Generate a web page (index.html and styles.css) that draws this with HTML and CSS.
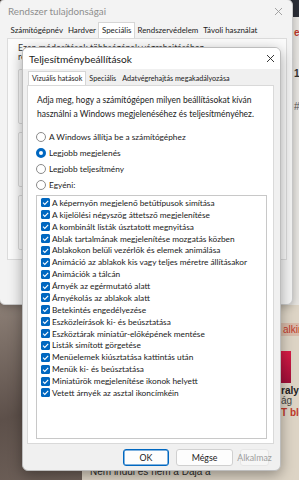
FILE: index.html
```html
<!DOCTYPE html>
<html lang="hu">
<head>
<meta charset="utf-8">
<title>Teljesítménybeállítások</title>
<link rel="stylesheet" href="styles.css">
</head>
<body>
<div class="desktop">
  <div class="browser">
    <div class="b-top"></div>
    <div class="b-body">
      <div class="b-main">
        <div class="b-caption">Nem indul és nem a Dája a</div>
      </div>
      <div class="b-side">
        <div class="b-strip">
          <span class="b-e">e</span>
          <span class="b-num">1:</span>
          <span class="b-hash">#</span>
        </div>
        <span class="b-pill">alkir</span>
        <div class="b-img"></div>
        <span class="b-bold">raly</span>
        <span class="b-small">ág</span>
        <span class="b-red">T blog</span>
      </div>
    </div>
  </div>

  <div class="win outer">
    <div class="titlebar">
      <span class="title">Rendszer tulajdonságai</span>
      <svg class="close" width="9" height="9" viewBox="0 0 9 9"><path d="M1 1L8 8M8 1L1 8" stroke="#9a9a9a" stroke-width="0.9" fill="none"/></svg>
    </div>
    <div class="tabs">
      <span class="tab">Számítógépnév</span>
      <span class="tab">Hardver</span>
      <span class="tab sel">Speciális</span>
      <span class="tab">Rendszervédelem</span>
      <span class="tab">Távoli használat</span>
    </div>
    <div class="panel">
      <p class="note">Ezen módosítások többségének végrehajtásához rendszergazdaként kell bejelentkeznie.</p>
      <div class="group"><span class="legend">Teljesítmény</span></div>
      <div class="group"><span class="legend">Felhasználói profilok</span></div>
      <div class="group"><span class="legend">Indítás és helyreállítás</span></div>
    </div>
  </div>

  <div class="win inner">
    <div class="titlebar">
      <span class="title">Teljesítménybeállítások</span>
      <svg class="close" width="9" height="9" viewBox="0 0 9 9"><path d="M1 1L8 8M8 1L1 8" stroke="#222" stroke-width="0.9" fill="none"/></svg>
    </div>
    <div class="body">
      <div class="tabs">
        <span class="tab sel">Vizuális hatások</span>
        <span class="tab">Speciális</span>
        <span class="tab">Adatvégrehajtás megakadályozása</span>
      </div>
      <div class="panel">
        <p class="intro">Adja meg, hogy a számítógépen milyen beállításokat kíván<br>használni a Windows megjelenéséhez és teljesítményéhez.</p>
        <div class="radios">
          <div class="radio"><span class="rb"></span>A Windows állítja be a számítógéphez</div>
          <div class="radio"><span class="rb on"></span>Legjobb megjelenés</div>
          <div class="radio"><span class="rb"></span>Legjobb teljesítmény</div>
          <div class="radio"><span class="rb"></span>Egyéni:</div>
        </div>
        <div class="list">
          <div class="item"><span class="cb"><svg width="9" height="9" viewBox="0 0 9 9"><path d="M2 4.6L3.8 6.4L7.2 2.8" stroke="#fff" stroke-width="1.1" fill="none"/></svg></span>A képernyőn megjelenő betűtípusok simítása</div>
          <div class="item"><span class="cb"><svg width="9" height="9" viewBox="0 0 9 9"><path d="M2 4.6L3.8 6.4L7.2 2.8" stroke="#fff" stroke-width="1.1" fill="none"/></svg></span>A kijelölési négyszög áttetsző megjelenítése</div>
          <div class="item"><span class="cb"><svg width="9" height="9" viewBox="0 0 9 9"><path d="M2 4.6L3.8 6.4L7.2 2.8" stroke="#fff" stroke-width="1.1" fill="none"/></svg></span>A kombinált listák úsztatott megnyitása</div>
          <div class="item"><span class="cb"><svg width="9" height="9" viewBox="0 0 9 9"><path d="M2 4.6L3.8 6.4L7.2 2.8" stroke="#fff" stroke-width="1.1" fill="none"/></svg></span>Ablak tartalmának megjelenítése mozgatás közben</div>
          <div class="item"><span class="cb"><svg width="9" height="9" viewBox="0 0 9 9"><path d="M2 4.6L3.8 6.4L7.2 2.8" stroke="#fff" stroke-width="1.1" fill="none"/></svg></span>Ablakokon belüli vezérlők és elemek animálása</div>
          <div class="item"><span class="cb"><svg width="9" height="9" viewBox="0 0 9 9"><path d="M2 4.6L3.8 6.4L7.2 2.8" stroke="#fff" stroke-width="1.1" fill="none"/></svg></span>Animáció az ablakok kis vagy teljes méretre állításakor</div>
          <div class="item"><span class="cb"><svg width="9" height="9" viewBox="0 0 9 9"><path d="M2 4.6L3.8 6.4L7.2 2.8" stroke="#fff" stroke-width="1.1" fill="none"/></svg></span>Animációk a tálcán</div>
          <div class="item"><span class="cb"><svg width="9" height="9" viewBox="0 0 9 9"><path d="M2 4.6L3.8 6.4L7.2 2.8" stroke="#fff" stroke-width="1.1" fill="none"/></svg></span>Árnyék az egérmutató alatt</div>
          <div class="item"><span class="cb"><svg width="9" height="9" viewBox="0 0 9 9"><path d="M2 4.6L3.8 6.4L7.2 2.8" stroke="#fff" stroke-width="1.1" fill="none"/></svg></span>Árnyékolás az ablakok alatt</div>
          <div class="item"><span class="cb"><svg width="9" height="9" viewBox="0 0 9 9"><path d="M2 4.6L3.8 6.4L7.2 2.8" stroke="#fff" stroke-width="1.1" fill="none"/></svg></span>Betekintés engedélyezése</div>
          <div class="item"><span class="cb"><svg width="9" height="9" viewBox="0 0 9 9"><path d="M2 4.6L3.8 6.4L7.2 2.8" stroke="#fff" stroke-width="1.1" fill="none"/></svg></span>Eszközleírások ki- és beúsztatása</div>
          <div class="item"><span class="cb"><svg width="9" height="9" viewBox="0 0 9 9"><path d="M2 4.6L3.8 6.4L7.2 2.8" stroke="#fff" stroke-width="1.1" fill="none"/></svg></span>Eszköztárak miniatűr-előképének mentése</div>
          <div class="item"><span class="cb"><svg width="9" height="9" viewBox="0 0 9 9"><path d="M2 4.6L3.8 6.4L7.2 2.8" stroke="#fff" stroke-width="1.1" fill="none"/></svg></span>Listák simított görgetése</div>
          <div class="item"><span class="cb"><svg width="9" height="9" viewBox="0 0 9 9"><path d="M2 4.6L3.8 6.4L7.2 2.8" stroke="#fff" stroke-width="1.1" fill="none"/></svg></span>Menüelemek kiúsztatása kattintás után</div>
          <div class="item"><span class="cb"><svg width="9" height="9" viewBox="0 0 9 9"><path d="M2 4.6L3.8 6.4L7.2 2.8" stroke="#fff" stroke-width="1.1" fill="none"/></svg></span>Menük ki- és beúsztatása</div>
          <div class="item"><span class="cb"><svg width="9" height="9" viewBox="0 0 9 9"><path d="M2 4.6L3.8 6.4L7.2 2.8" stroke="#fff" stroke-width="1.1" fill="none"/></svg></span>Miniatűrök megjelenítése ikonok helyett</div>
          <div class="item"><span class="cb"><svg width="9" height="9" viewBox="0 0 9 9"><path d="M2 4.6L3.8 6.4L7.2 2.8" stroke="#fff" stroke-width="1.1" fill="none"/></svg></span>Vetett árnyék az asztal ikoncímkéin</div>
        </div>
      </div>
      <div class="buttons">
        <span class="btn default">OK</span>
        <span class="btn">Mégse</span>
        <span class="btn disabled">Alkalmaz</span>
      </div>
    </div>
  </div>
</div>
</body>
</html>
```

FILE: styles.css
```css
* { box-sizing: border-box; }
html, body { margin: 0; padding: 0; }
body {
  width: 299px;
  height: 480px;
  overflow: hidden;
  font-family: Lato, "Noto Sans", sans-serif;
  font-size: 8.8px;
  color: #1b1b1b;
}
.desktop {
  position: relative;
  width: 299px;
  height: 480px;
  overflow: hidden;
  background: linear-gradient(165deg, #4a3f3a 0%, #6f625a 45%, #8a7d74 55%, #5d504a 75%, #7a6c63 100%);
}

/* background browser window */
.browser {
  position: absolute;
  left: 82px;
  top: 0;
  width: 230px;
  height: 480px;
  display: flex;
  flex-direction: column;
  background: #ddd4c5;
}
.b-top { height: 17px; background: #2b2e36; flex: none; }
.b-body { flex: 1; display: flex; }
.b-main {
  width: 199px;
  display: flex;
  flex-direction: column;
  justify-content: flex-end;
  padding: 0 0 3px 8px;
}
.b-caption { font-family: "Liberation Sans", sans-serif; font-size: 10px; color: #2a2a2a; }
.b-side {
  flex: 1;
  display: flex;
  flex-direction: column;
  align-items: flex-start;
  font-family: "Liberation Sans", sans-serif;
}
.b-strip {
  width: 31px;
  height: 288px;
  background: #e8e6e2;
  display: flex;
  flex-direction: column;
  padding: 10px 0 0 13px;
  font-size: 10px;
}
.b-e { color: #c0392b; font-weight: bold; }
.b-num { color: #333; margin-top: 30px; font-weight: bold; }
.b-hash { color: #555; margin-top: 22px; }
.b-pill {
  margin-top: 18px;
  background: #d8b9a8;
  color: #c0392b;
  font-size: 10px;
  padding: 1px 2px;
}
.b-img {
  margin-top: 15px;
  width: 10px;
  height: 32px;
  background: linear-gradient(180deg, #d81b45, #a0103a);
}
.b-bold { font-weight: bold; font-size: 10px; color: #222; margin-top: 2px; }
.b-small { font-size: 10px; color: #444; line-height: 10px; }
.b-red { font-size: 10px; color: #c0392b; font-weight: bold; line-height: 13px; }

/* windows */
.win {
  position: absolute;
  display: flex;
  flex-direction: column;
  border: 1px solid #c9c9c9;
  border-radius: 6px;
  overflow: hidden;
}
.titlebar {
  display: flex;
  align-items: center;
  justify-content: space-between;
  flex: none;
}

.outer {
  left: -1px;
  top: -1px;
  width: 294px;
  height: 306px;
  background: #f3f3f3;
  box-shadow: 0 2px 8px rgba(0,0,0,0.25);
}
.outer .titlebar { height: 22px; padding: 0 9px 0 8px; }
.outer .title { color: #8e8e8e; font-size: 9.8px; }
.outer .tabs {
  display: flex;
  align-items: flex-end;
  height: 16px;
  padding-left: 8px;
  font-size: 7.9px;
  white-space: nowrap;
}
.outer .tab {
  padding: 0 2.5px;
  height: 15px;
  line-height: 14px;
  color: #1b1b1b;
}
.outer .tab.sel {
  background: #fff;
  border: 1px solid #d6d6d6;
  border-bottom: none;
  height: 16px;
}
.outer .panel {
  flex: 1;
  margin: 0 5px 44px 7px;
  background: #fbfbfb;
  border: 1px solid #dcdcdc;
  padding: 4px 10px;
  display: flex;
  flex-direction: column;
  gap: 8px;
}
.note { margin: 0; line-height: 9px; color: #333; height: 18px; overflow: hidden; }
.group {
  height: 55px;
  border: 1px solid #dadada;
  border-radius: 2px;
  padding: 2px 4px;
}
.legend { color: #333; }

.inner {
  left: 22px;
  top: 47px;
  width: 259px;
  height: 424px;
  background: #f0f0f0;
  border-color: #bdbdbd;
  box-shadow: 0 4px 14px rgba(0,0,0,0.35);
}
.inner .titlebar {
  height: 21px;
  background: #fff;
  padding: 0 5px 0 6px;
}
.inner .title { font-size: 10.2px; color: #1b1b1b; }
.inner .body {
  flex: 1;
  display: flex;
  flex-direction: column;
  padding: 2px 6px 0 4px;
}
.inner .tabs {
  display: flex;
  align-items: flex-end;
  height: 14px;
  padding-left: 1px;
  font-size: 7.2px;
  white-space: nowrap;
}
.inner .tab {
  padding: 0 3px;
  line-height: 13px;
  height: 13px;
}
.inner .tab.sel {
  background: #fff;
  border: 1px solid #d6d6d6;
  border-bottom: none;
  height: 14px;
}
.inner .panel {
  height: 359px;
  background: #fff;
  border: 1px solid #d9d9d9;
  padding: 7px 7px 0 8px;
}
.intro { margin: 0 0 0 1px; line-height: 14px; font-size: 8.5px; white-space: nowrap; }
.radios { margin-top: 8px; display: flex; flex-direction: column; }
.radio {
  height: 16px;
  display: flex;
  align-items: center;
  gap: 3px;
  font-size: 8.3px;
}
.rb {
  width: 10px;
  height: 10px;
  border-radius: 50%;
  border: 1px solid #8a8a8a;
  background: #fff;
  flex: none;
}
.rb.on {
  border: 3px solid #0067c0;
  background: #fff;
}
.list {
  margin-top: 2px;
  width: 231px;
  height: 244px;
  border: 1px solid #c8c8c8;
  padding: 1px 0 0 4px;
  font-size: 8.3px;
}
.item {
  height: 11.875px;
  display: flex;
  align-items: center;
  gap: 2px;
  white-space: nowrap;
}
.cb {
  width: 9px;
  height: 9px;
  border-radius: 1.5px;
  background: #0067c0;
  flex: none;
  display: flex;
}
.buttons {
  flex: 1;
  display: flex;
  justify-content: flex-end;
  align-items: center;
  gap: 7px;
  padding-right: 5px;
}
.btn {
  width: 57px;
  height: 17px;
  border: 1px solid #d0d0d0;
  border-radius: 3px;
  background: #fdfdfd;
  display: flex;
  align-items: center;
  justify-content: center;
  font-size: 8.8px;
}
.btn.default { width: 46px; border: 1px solid #0067c0; box-shadow: inset 0 0 0 0.5px #0067c0; }
.btn.disabled { width: 29px; color: #9d9d9d; border-color: #e6e6e6; background: #f6f6f6; }
```
